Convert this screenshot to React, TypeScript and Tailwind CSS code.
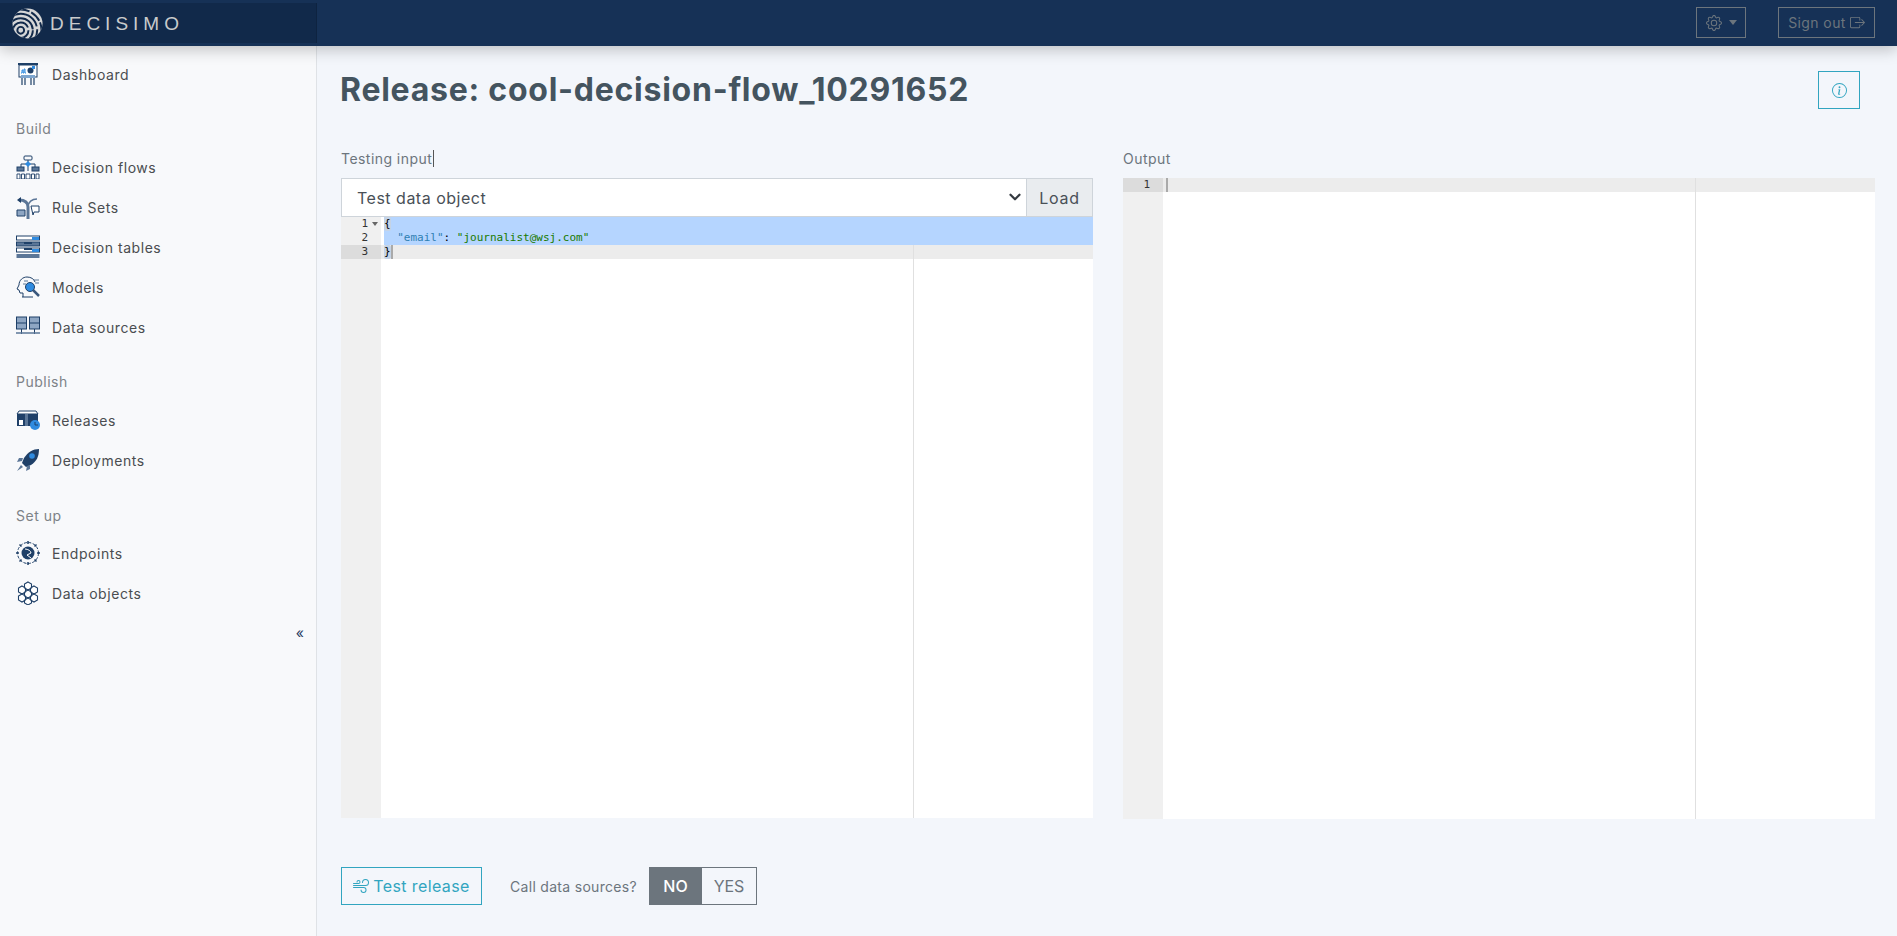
import { ReactNode } from 'react';
import { ChevronDown } from 'lucide-react';
import { BsGear, BsBoxArrowRight, BsInfoCircle, BsWind } from 'react-icons/bs';

const NAVY = '#1f4068';
const BLUE = '#2f8be0';

function Globe() {
  return (
    <svg width="31" height="31" viewBox="0 0 32 32" fill="none">
      <defs>
        <clipPath id="globe-clip">
          <circle cx="16" cy="16" r="15.500" />
        </clipPath>
      </defs>
      <circle cx="16" cy="16" r="15.500" fill="#d5d6d7" />
      <g clipPath="url(#globe-clip)" stroke="#11294a" strokeWidth="2">
        <circle cx="9" cy="23" r="3.500" />
        <circle cx="9" cy="23" r="8" strokeDasharray="22 3" />
        <circle cx="9" cy="23" r="12.500" strokeDasharray="30 3 12 2" />
        <circle cx="9" cy="23" r="17" strokeDasharray="40 3 16 3" />
        <circle cx="9" cy="23" r="21.500" strokeDasharray="12 2" />
      </g>
    </svg>
  );
}

const icons: Record<string, ReactNode> = {
  dashboard: (
    <>
      <rect x="2" y="1" width="20" height="2" fill={NAVY} />
      <rect x="3" y="3" width="18" height="12" fill="#fff" stroke={NAVY} />
      <path d="M5 11h1V8h1v3h1V7h1v4h1" stroke={BLUE} fill="none" />
      <circle cx="14.500" cy="8.500" r="3" fill={NAVY} />
      <path d="M16 4h3v3h-3z" fill={BLUE} />
      <rect x="5" y="13" width="14" height="3" fill="#7da6d0" />
      <path d="M6 16v7M9 16v7M15 16v7M18 16v7" stroke={NAVY} strokeWidth="1.200" />
    </>
  ),
  flows: (
    <>
      <rect x="8" y="1" width="8" height="4" rx="1" fill="none" stroke={NAVY} />
      <path d="M12 5v11M5 12V9h14v3" stroke={NAVY} fill="none" />
      <path d="M12 6l3 3-3 3-3-3z" fill={BLUE} />
      <rect x="1" y="12" width="7" height="4" fill="#5b7697" stroke={NAVY} />
      <rect x="16" y="12" width="7" height="4" fill="#5b7697" stroke={NAVY} />
      <path d="M1 19h3v5H1zM5.500 19h3v5h-3zM10 19h4v5h-4zM15.500 19h3v5h-3zM20 19h3v5h-3z" fill="#fff" stroke={NAVY} strokeWidth="0.900" />
    </>
  ),
  rules: (
    <>
      <path d="M12 24V12C12 7 8 5 3 5" stroke="#5b7697" strokeWidth="3" fill="none" />
      <path d="M12 12c0-5 4-8 9-8" stroke="#5b7697" strokeWidth="1.500" fill="none" />
      <path d="M1 5l4-3v6z" fill={NAVY} />
      <path d="M1 15h8v6H1z" fill="#8ea6c3" stroke={NAVY} />
      <path d="M15 11h8v6h-5l-1 3z" fill="#fff" stroke={NAVY} />
    </>
  ),
  tables: (
    <>
      <rect x="0.500" y="1" width="23" height="4" fill="#fff" stroke={NAVY} />
      <rect x="0.500" y="7" width="23" height="4" fill="#5b7697" stroke={NAVY} />
      <rect x="0.500" y="13" width="23" height="4" fill="#fff" stroke={NAVY} />
      <rect x="0.500" y="19" width="23" height="4" fill="#5b7697" />
      <path d="M16 2h7v3h-7zM16 14h7v3h-7z" fill={BLUE} />
      <path d="M8 8h8M8 14h8" stroke={NAVY} strokeWidth="2" />
    </>
  ),
  models: (
    <>
      <path d="M7 22v-4H4l-1-3-2-1 2-4c0-5 4-8 8-8 4 0 7 2 8 5" stroke={NAVY} fill="none" />
      <path d="M6 22h11" stroke={NAVY} />
      <circle cx="14" cy="12" r="4.500" fill={BLUE} stroke={NAVY} />
      <path d="M17 15l6 6" stroke="#3b587c" strokeWidth="2.500" />
      <path d="M18 5h5M19 8h4M8 6h4M7 9h3" stroke="#5b7697" />
    </>
  ),
  sources: (
    <>
      <rect x="0.500" y="2" width="10" height="12" fill="#8ea6c3" stroke={NAVY} />
      <rect x="13.500" y="2" width="10" height="12" fill="#8ea6c3" stroke={NAVY} />
      <path d="M0 8h11M13 8h11" stroke={NAVY} />
      <path d="M5.500 14v5M18.500 14v5" stroke={NAVY} />
      <path d="M0 18h24" stroke="#5b7697" strokeWidth="1.500" />
    </>
  ),
  releases: (
    <>
      <path d="M1 6l2-3h17l2 3z" fill="#fff" stroke={NAVY} />
      <rect x="1" y="6" width="21" height="12" fill={NAVY} />
      <rect x="3" y="12" width="4" height="5" fill="#fff" />
      <rect x="9" y="6" width="3" height="12" fill="#5b7697" />
      <circle cx="19" cy="17" r="5" fill={BLUE} />
      <path d="M19 14v3h3" stroke={NAVY} fill="none" />
    </>
  ),
  deployments: (
    <>
      <path d="M23 1c-6 0-11 3-15 9l-2 5 4 4 5-2c6-4 8-9 8-16z" fill={NAVY} />
      <circle cx="16" cy="8" r="2.800" fill={BLUE} />
      <path d="M7 10H3l-2 4 5-1zM14 17v4l-4 2 1-5zM5 17l-4 6 6-4z" fill="#5b7697" />
    </>
  ),
  endpoints: (
    <>
      <circle cx="12" cy="12" r="10.500" fill="none" stroke={NAVY} strokeDasharray="3 1.500" />
      <circle cx="12" cy="12" r="6.500" fill={NAVY} />
      <path d="M9 8c3 0 6 2 6 4l-4 2 4 3" stroke="#fff" fill="none" />
      <path d="M12 0v3M12 21v3M0 12h3M21 12h3M3.500 3.500l2 2M18.500 18.500l2 2M20.500 3.500l-2 2M5.500 18.500l-2 2" stroke={NAVY} strokeWidth="1.500" />
    </>
  ),
  objects: (
    <>
      <path d="M12 1l3.500 2v4L12 9 8.500 7V3zM6 5l3.500 2v4L6 13l-3.500-2V7zM18 5l3.500 2v4L18 13l-3.500-2V7zM12 9l3.500 2v4L12 17l-3.500-2v-4zM6 13l3.500 2v4L6 21l-3.500-2v-4zM18 13l3.500 2v4L18 21l-3.500-2v-4zM12 17l3.500 2v3L12 24l-3.500-2v-3z" fill="#fff" stroke={NAVY} strokeWidth="1.100" />
    </>
  ),
};

function NavItem({ icon, label }: { icon: string; label: string }) {
  return (
    <a className="flex h-10 items-center gap-3 pl-4 text-[14px] tracking-[0.55px] text-[#4a4d50]">
      <svg width="24" height="24" viewBox="0 0 24 24" className="shrink-0">{icons[icon]}</svg>
      {label}
    </a>
  );
}

function SectionTitle({ children }: { children: ReactNode }) {
  return <div className="pl-4 text-[14px] tracking-[0.5px] text-[#7d8287]">{children}</div>;
}

function Bracket({ children }: { children: string }) {
  return <span className="inline-block h-[14px] rounded-[2px] bg-[#c4d3e6] align-top">{children}</span>;
}

function Cursor() {
  return <span className="inline-block h-[14px] w-[2px] bg-[#aaa] align-top" />;
}

type Line = { num: number; active?: boolean; selected?: boolean; text: ReactNode };

function Editor({ lines, marginTop, height }: { lines: Line[]; marginTop: number; height: string }) {
  return (
    <div className={`relative flex bg-white font-['DejaVu_Sans_Mono',monospace] text-[11px] leading-[14px] text-black ${height}`}>
      <div className="w-10 shrink-0 bg-[#f0f0f0] text-[#333]">
        {lines.map((l) => (
          <div key={l.num} className={`relative h-[14px] pr-[13px] text-right ${l.active ? 'bg-[#dcdcdc]' : ''}`}>
            {l.num}
            {l.num === 1 && lines.length > 1 && (
              <span className="absolute right-[3px] top-[5px] h-0 w-0 border-x-[3px] border-t-[4px] border-x-transparent border-t-[#666]" />
            )}
          </div>
        ))}
      </div>
      <div className="min-w-0 flex-1">
        {lines.map((l) =>
          l.selected ? (
            <div key={l.num} className="ml-[3px] h-[14px] whitespace-pre bg-[#b5d5ff]">{l.text}</div>
          ) : (
            <div key={l.num} className={`h-[14px] whitespace-pre pl-[3px] ${l.active ? 'bg-[#ececec]' : ''}`}>{l.text}</div>
          ),
        )}
      </div>
      <div className="absolute bottom-0 right-[179px] w-px bg-[#e0e0e0]" style={{ top: marginTop }} />
    </div>
  );
}

export default function App() {
  return (
    <div className="flex h-[936px] flex-col overflow-hidden bg-[#f3f6fb] font-['Inter',sans-serif]">
      <header className="relative z-10 flex h-[46px] shrink-0 items-center justify-between bg-[#163156] pr-[22px] shadow-[0_4px_14px_rgba(0,0,0,0.22)]">
        <div className="flex h-10 w-[317px] items-center gap-[7px] border-r border-[#0e2340] bg-[#11294a] pl-3">
          <Globe />
          <span className="font-['Liberation_Sans',sans-serif] text-[19px] leading-none tracking-[5px] text-[#c9cbcc]">DECISIMO</span>
        </div>
        <div className="flex items-center gap-8 pb-px">
          <button className="flex h-[31px] w-[50px] items-center justify-center gap-[7px] border border-[#6c757d] text-[#6c757d]">
            <BsGear size={16} />
            <span className="h-0 w-0 border-x-[4px] border-t-[5px] border-x-transparent border-t-[#6c757d]" />
          </button>
          <button className="flex h-[31px] w-[97px] items-center justify-center gap-1 border border-[#6c757d] text-[14px] tracking-[0.4px] text-[#6c757d]">
            Sign out <BsBoxArrowRight size={15} />
          </button>
        </div>
      </header>

      <div className="flex min-h-0 flex-1">
        <aside className="w-[317px] shrink-0 border-r border-[#dfe2e6] bg-[#f8f9fb]">
          <div className="pt-2">
            <NavItem icon="dashboard" label="Dashboard" />
          </div>
          <div className="mt-[24px]">
            <SectionTitle>Build</SectionTitle>
          </div>
          <div className="mt-[8px]">
            <NavItem icon="flows" label="Decision flows" />
            <NavItem icon="rules" label="Rule Sets" />
            <NavItem icon="tables" label="Decision tables" />
            <NavItem icon="models" label="Models" />
            <NavItem icon="sources" label="Data sources" />
          </div>
          <div className="mt-[24px]">
            <SectionTitle>Publish</SectionTitle>
          </div>
          <div className="mt-[8px]">
            <NavItem icon="releases" label="Releases" />
            <NavItem icon="deployments" label="Deployments" />
          </div>
          <div className="mt-[25px]">
            <SectionTitle>Set up</SectionTitle>
          </div>
          <div className="mt-[7px]">
            <NavItem icon="endpoints" label="Endpoints" />
            <NavItem icon="objects" label="Data objects" />
          </div>
          <div className="mt-[10px] pr-3 text-right text-[14px] leading-5 text-[#1f3a5f]">«</div>
        </aside>

        <main className="min-w-0 flex-1 pl-[24px] pr-[22px]">
          <div className="flex items-start justify-between pr-[15px] pt-[25px]">
            <h1 className="-ml-px text-[32px] font-bold leading-[38px] tracking-[0.75px] text-[#44545f]">Release: cool-decision-flow_10291652</h1>
            <button className="flex h-[38px] w-[42px] items-center justify-center border border-[#31a5c0] text-[#31a5c0]">
              <BsInfoCircle size={15} />
            </button>
          </div>

          <div className="mt-[38px] flex gap-[30px]">
            <section className="w-[752px] shrink-0">
              <label className="flex h-[23px] items-center text-[14px] tracking-[0.45px] text-[#6c757d]">
                Testing input<span className="ml-px inline-block h-[17px] w-px bg-[#555]" />
              </label>
              <div className="mt-[8px] flex h-[39px] border border-[#ced4da]">
                <div className="relative min-w-0 flex-1">
                  <select className="h-full w-full appearance-none bg-white pl-[15px] text-[16px] tracking-[0.5px] text-[#495057]">
                    <option>Test data object</option>
                  </select>
                  <ChevronDown size={18} strokeWidth={3} className="absolute right-[2px] top-[9px] text-[#343a40]" />
                </div>
                <button className="w-[66px] border-l border-[#ced4da] bg-[#e9ecef] text-[16px] tracking-[0.7px] text-[#495057]">Load</button>
              </div>
              <Editor
                height="h-[601px]"
                marginTop={28}
                lines={[
                  { num: 1, selected: true, text: <Bracket>{'{'}</Bracket> },
                  {
                    num: 2,
                    selected: true,
                    text: (
                      <>
                        {'  '}
                        <span className="text-[#2f7fb3]">"email"</span>: <span className="text-[#1a7a00]">"journalist@wsj.com"</span>
                      </>
                    ),
                  },
                  { num: 3, active: true, text: <><Bracket>{'}'}</Bracket><Cursor /></> },
                ]}
              />
            </section>

            <section className="min-w-0 flex-1">
              <label className="flex h-[23px] items-center text-[14px] tracking-[0.45px] text-[#6c757d]">Output</label>
              <div className="mt-[8px]">
                <Editor height="h-[641px]" marginTop={0} lines={[{ num: 1, active: true, text: <Cursor /> }]} />
              </div>
            </section>
          </div>

          <div className="mt-[48px] flex h-[38px] items-center">
            <button className="flex h-[38px] w-[141px] items-center justify-center gap-1 border border-[#31a5c0] text-[16px] tracking-[0.4px] text-[#31a5c0]">
              <BsWind size={16} /> Test release
            </button>
            <span className="ml-7 w-[127px] whitespace-nowrap text-[14px] tracking-[0.3px] text-[#6c757d]">Call data sources?</span>
            <div className="ml-[12px] flex h-[38px] text-[16px]">
              <span className="flex w-[53px] items-center justify-center border border-[#6c757d] bg-[#6c757d] font-medium text-white">NO</span>
              <span className="flex w-[55px] items-center justify-center border border-l-0 border-[#6c757d] text-[#6c757d]">YES</span>
            </div>
          </div>
        </main>
      </div>
    </div>
  );
}
